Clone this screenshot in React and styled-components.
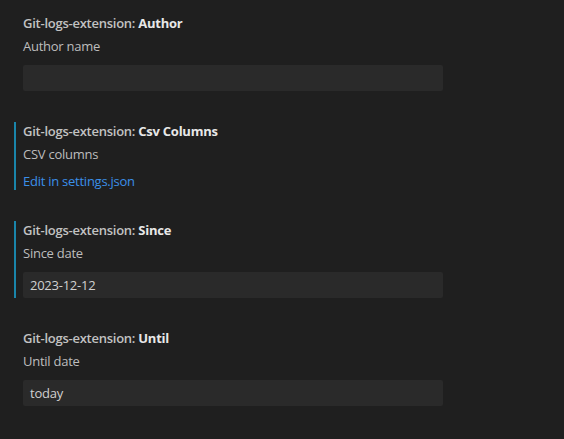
import React from "react";
import styled, { createGlobalStyle } from "styled-components";

const Global = createGlobalStyle`
  html, body { margin: 0; padding: 0; background: #1f1f1f; }
  body {
    font-family: "Open Sans", "Noto Sans", sans-serif;
    font-size: 13px;
    letter-spacing: -0.25px;
    color: #cccccc;
    width: 564px;
    height: 439px;
    overflow: hidden;
  }
`;

const Page = styled.div`
  display: flex;
  flex-direction: column;
  padding-top: 2px;
  background: #1f1f1f;
  min-height: 437px;
`;

const Item = styled.div`
  padding: 12px 0 19px 14px;
`;

const Contents = styled.div`
  display: flex;
  flex-direction: column;
  border-left: 2px solid ${(p) => (p.$marked ? "#1a85aa" : "transparent")};
  padding-left: 7px;
`;

const Title = styled.div`
  line-height: 18px;
  white-space: nowrap;
`;

const Category = styled.span`
  font-weight: 600;
  color: #c2c2c2;
`;

const Label = styled.span`
  font-weight: 700;
  color: #e8e8e8;
`;

const Description = styled.div`
  margin-top: 5px;
  line-height: 18px;
  color: #bdbdbd;
`;

const Input = styled.div`
  margin-top: 10px;
  width: 420px;
  height: 26px;
  box-sizing: border-box;
  padding: 0 7px;
  display: flex;
  align-items: center;
  background: #2a2a2a;
  border-radius: 2px;
  color: #d0d0d0;
`;

const Link = styled.a`
  margin-top: 10px;
  line-height: 17px;
  color: #3b8fe8;
  text-decoration: none;
  cursor: pointer;
`;

const settings = [
  { label: "Author", desc: "Author name", value: "" },
  { label: "Csv Columns", desc: "CSV columns", link: "Edit in settings.json", marked: true },
  { label: "Since", desc: "Since date", value: "2023-12-12", marked: true },
  { label: "Until", desc: "Until date", value: "today" },
];

export default function App() {
  return (
    <>
      <Global />
      <Page>
        {settings.map((s) => (
          <Item key={s.label}>
            <Contents $marked={s.marked}>
              <Title>
                <Category>Git-logs-extension: </Category>
                <Label>{s.label}</Label>
              </Title>
              <Description>{s.desc}</Description>
              {s.link ? <Link>{s.link}</Link> : <Input>{s.value}</Input>}
            </Contents>
          </Item>
        ))}
      </Page>
    </>
  );
}
